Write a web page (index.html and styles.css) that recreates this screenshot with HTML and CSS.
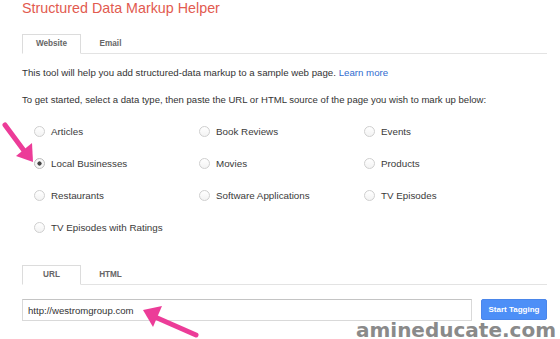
FILE: index.html
```html
<!DOCTYPE html>
<html>
<head>
<meta charset="utf-8">
<link rel="stylesheet" href="styles.css">
</head>
<body>
<div class="page">
  <h1 class="title">Structured Data Markup Helper</h1>
  <div class="tabs tabs-top">
    <div class="tab active">Website</div>
    <div class="tab">Email</div>
  </div>
  <p class="intro">This tool will help you add structured-data markup to a sample web page. <a class="link" href="#">Learn more</a></p>
  <p class="intro intro2">To get started, select a data type, then paste the URL or HTML source of the page you wish to mark up below:</p>
  <div class="types">
    <label class="opt"><input type="radio" name="t"><span>Articles</span></label>
    <label class="opt"><input type="radio" name="t"><span>Book Reviews</span></label>
    <label class="opt"><input type="radio" name="t"><span>Events</span></label>
    <label class="opt"><input type="radio" name="t" checked><span>Local Businesses</span></label>
    <label class="opt"><input type="radio" name="t"><span>Movies</span></label>
    <label class="opt"><input type="radio" name="t"><span>Products</span></label>
    <label class="opt"><input type="radio" name="t"><span>Restaurants</span></label>
    <label class="opt"><input type="radio" name="t"><span>Software Applications</span></label>
    <label class="opt"><input type="radio" name="t"><span>TV Episodes</span></label>
    <label class="opt"><input type="radio" name="t"><span>TV Episodes with Ratings</span></label>
  </div>
  <div class="tabs tabs-bottom">
    <div class="tab active">URL</div>
    <div class="tab">HTML</div>
  </div>
  <div class="urlrow">
    <input class="url" type="text" value="http://westromgroup.com">
    <button class="btn">Start Tagging</button>
  </div>
</div>
<svg class="arrows" width="560" height="339" viewBox="0 0 560 339">
  <line x1="5" y1="125" x2="25" y2="152" stroke="#ec3c98" stroke-width="5" stroke-linecap="round"/>
  <polygon points="33,162 16,156 32,143" fill="#ec3c98"/>
  <line x1="155" y1="317" x2="196" y2="335" stroke="#ec3c98" stroke-width="5" stroke-linecap="round"/>
  <polygon points="143,310 162,306 153,327" fill="#ec3c98"/>
</svg>
<div class="watermark">amineducate.com</div>
</body>
</html>
```

FILE: styles.css
```css
html, body {
  margin: 0;
  padding: 0;
  background: #fff;
}
body {
  width: 560px;
  height: 339px;
  overflow: hidden;
  position: relative;
  font-family: "Liberation Sans", Arial, sans-serif;
  color: #333;
}
.page {
  padding-left: 22px;
  width: 525px;
}
.title {
  margin: 0;
  font-weight: normal;
  font-size: 14.3px;
  line-height: 16px;
  color: #e25a4f;
}
.tabs {
  display: flex;
  height: 19px;
  border-bottom: 1px solid #e3e3e3;
}
.tabs-top {
  margin-top: 18px;
}
.tabs-bottom {
  margin-top: 32px;
}
.tab {
  width: 59px;
  height: 19px;
  box-sizing: border-box;
  text-align: center;
  font-size: 8.2px;
  font-weight: bold;
  color: #666;
  line-height: 18px;
  padding-top: 1px;
}
.tab.active {
  height: 20px;
  border: 1px solid #dcdcdc;
  border-bottom-color: #fff;
  background: #fff;
  padding-top: 0;
}
.intro {
  margin: 13px 0 0;
  font-size: 9.7px;
  line-height: 12px;
  color: #333;
}
.intro2 {
  margin-top: 15px;
  font-size: 9.55px;
}
.link {
  color: #2f6bd0;
  text-decoration: none;
}
.types {
  margin-top: 19px;
  padding-left: 12px;
  display: grid;
  grid-template-columns: 165px 165px 165px;
  row-gap: 20px;
}
.opt {
  display: flex;
  align-items: center;
  height: 12px;
  font-size: 9.8px;
  color: #3a3a3a;
}
.opt input {
  appearance: none;
  -webkit-appearance: none;
  margin: 0 6px 0 0;
  width: 11px;
  height: 11px;
  box-sizing: border-box;
  border: 1px solid #cfcfcf;
  border-radius: 50%;
  background: linear-gradient(#ffffff, #f3f3f3);
  flex: none;
}
.opt input:checked {
  border-color: #bdbdbd;
  background: radial-gradient(circle, #444 0, #444 1.8px, #f6f6f6 2.4px);
}
.urlrow {
  display: flex;
  align-items: flex-start;
  margin-top: 14px;
  gap: 9px;
}
.url {
  width: 450px;
  height: 22px;
  box-sizing: border-box;
  margin: 0;
  border: 1px solid #d9d9d9;
  border-top-color: #c4c4c4;
  padding: 0 0 0 5px;
  font-family: "Liberation Sans", Arial, sans-serif;
  font-size: 9.6px;
  color: #333;
  outline: none;
}
.btn {
  width: 66px;
  height: 21px;
  margin: 0;
  padding: 0;
  border: 1px solid #4a86ea;
  border-radius: 2px;
  background: #4d8ff7;
  color: #fff;
  font-family: "Liberation Sans", Arial, sans-serif;
  font-size: 8px;
  font-weight: bold;
}
.arrows {
  position: absolute;
  left: 0;
  top: 0;
  pointer-events: none;
}
.watermark {
  position: absolute;
  right: 4px;
  top: 321px;
  font-family: "DejaVu Sans", sans-serif;
  font-weight: bold;
  font-size: 20px;
  line-height: 18px;
  color: #8a8a8a;
}
```
